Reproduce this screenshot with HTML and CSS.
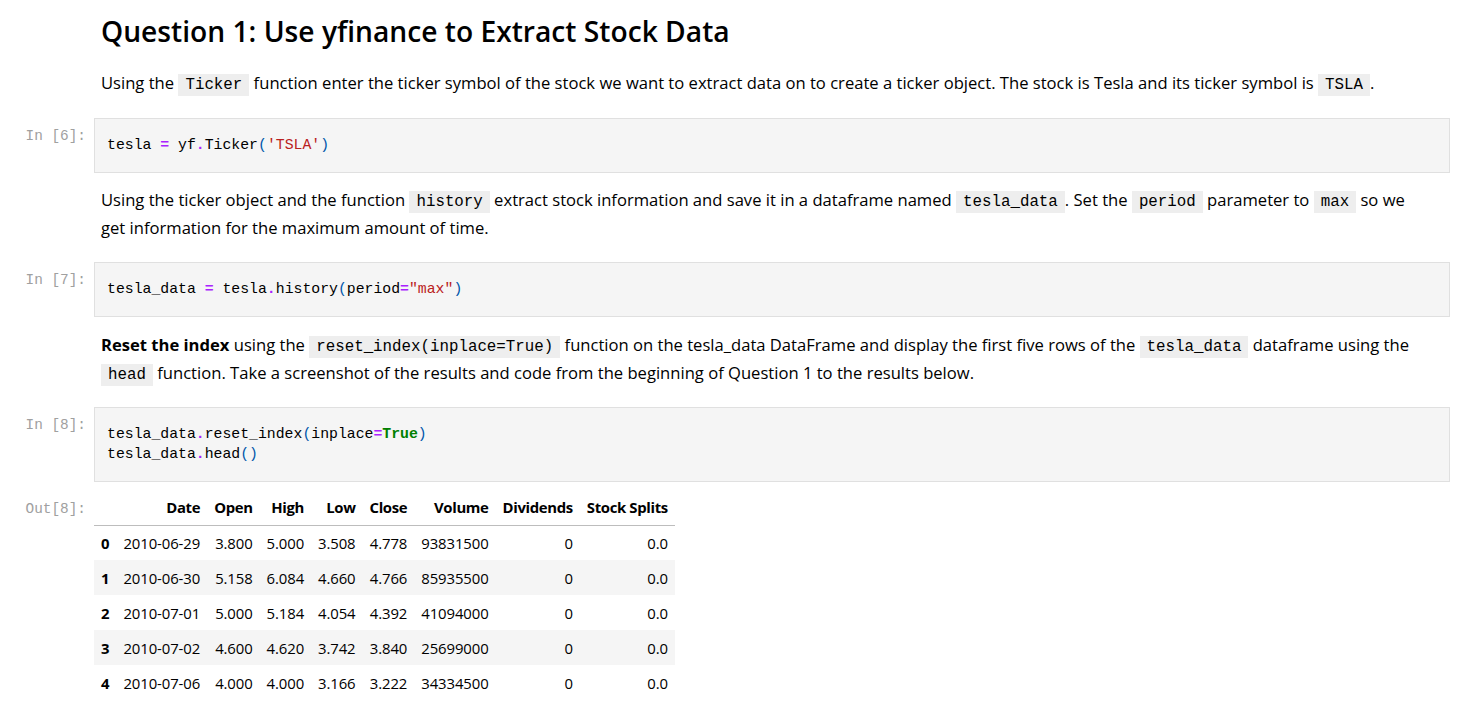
FILE: index.html
```html
<!DOCTYPE html>
<html>
<head>
<meta charset="utf-8">
<link rel="stylesheet" href="styles.css">
</head>
<body>
<div class="notebook">
  <div class="cell md first">
    <div class="prompt"></div>
    <div class="md-content">
      <h1>Question 1: Use yfinance to Extract Stock Data</h1>
      <p>Using the <code>Ticker</code> function enter the ticker symbol of the stock we want to extract data on to create a ticker object. The stock is Tesla and its ticker symbol is <code>TSLA</code>.</p>
    </div>
  </div>

  <div class="cell code">
    <div class="prompt">In&nbsp;[6]:</div>
    <div class="input"><pre>tesla <span class="op">=</span> yf<span class="op">.</span>Ticker<span class="br">(</span><span class="str">'TSLA'</span><span class="br">)</span></pre></div>
  </div>

  <div class="cell md">
    <div class="prompt"></div>
    <div class="md-content">
      <p>Using the ticker object and the function <code>history</code> extract stock information and save it in a dataframe named <code>tesla_data</code>. Set the <code>period</code> parameter to <code>max</code> so we get information for the maximum amount of time.</p>
    </div>
  </div>

  <div class="cell code">
    <div class="prompt">In&nbsp;[7]:</div>
    <div class="input"><pre>tesla_data <span class="op">=</span> tesla<span class="op">.</span>history<span class="br">(</span>period<span class="op">=</span><span class="str">"max"</span><span class="br">)</span></pre></div>
  </div>

  <div class="cell md roomy">
    <div class="prompt"></div>
    <div class="md-content">
      <p><strong>Reset the index</strong> using the <code>reset_index(inplace=True)</code> function on the tesla_data DataFrame and display the first five rows of the <code>tesla_data</code> dataframe using the <code>head</code> function. Take a screenshot of the results and code from the beginning of Question 1 to the results below.</p>
    </div>
  </div>

  <div class="cell code">
    <div class="prompt">In&nbsp;[8]:</div>
    <div class="input"><pre>tesla_data<span class="op">.</span>reset_index<span class="br">(</span>inplace<span class="op">=</span><span class="kw">True</span><span class="br">)</span>
tesla_data<span class="op">.</span>head<span class="br">()</span></pre></div>
  </div>

  <div class="cell out">
    <div class="prompt">Out[8]:</div>
    <div class="output">
      <table class="df">
        <thead>
          <tr><th></th><th>Date</th><th>Open</th><th>High</th><th>Low</th><th>Close</th><th>Volume</th><th>Dividends</th><th>Stock Splits</th></tr>
        </thead>
        <tbody>
          <tr><th>0</th><td>2010-06-29</td><td>3.800</td><td>5.000</td><td>3.508</td><td>4.778</td><td>93831500</td><td>0</td><td>0.0</td></tr>
          <tr><th>1</th><td>2010-06-30</td><td>5.158</td><td>6.084</td><td>4.660</td><td>4.766</td><td>85935500</td><td>0</td><td>0.0</td></tr>
          <tr><th>2</th><td>2010-07-01</td><td>5.000</td><td>5.184</td><td>4.054</td><td>4.392</td><td>41094000</td><td>0</td><td>0.0</td></tr>
          <tr><th>3</th><td>2010-07-02</td><td>4.600</td><td>4.620</td><td>3.742</td><td>3.840</td><td>25699000</td><td>0</td><td>0.0</td></tr>
          <tr><th>4</th><td>2010-07-06</td><td>4.000</td><td>4.000</td><td>3.166</td><td>3.222</td><td>34334500</td><td>0</td><td>0.0</td></tr>
        </tbody>
      </table>
    </div>
  </div>
</div>
</body>
</html>
```

FILE: styles.css
```css
html, body {
  margin: 0;
  padding: 0;
  background: #ffffff;
}

body {
  font-family: "Open Sans", "Noto Sans", sans-serif;
  color: #000000;
}

.notebook {
  padding-right: 15px;
}

.cell {
  display: flex;
  align-items: flex-start;
}

.prompt {
  flex: none;
  width: 94px;
  box-sizing: border-box;
  padding-right: 8px;
  text-align: right;
  font-family: "Liberation Mono", monospace;
  font-size: 14.4px;
  line-height: 20px;
  color: #a0a0a0;
  white-space: nowrap;
}

.md {
  padding: 13px 0 20px;
}

.md.roomy {
  padding-top: 14px;
}

.md.first {
  padding: 11px 0 21px;
}

.md-content {
  flex: 1;
  min-width: 0;
  padding-left: 7px;
  padding-right: 40px;
}

h1 {
  margin: 0 0 18px;
  font-size: 28.2px;
  font-weight: 600;
  line-height: 40px;
  color: #000;
}

p {
  margin: 0;
  font-size: 16.6px;
  line-height: 28px;
}

strong {
  font-weight: 700;
}

code {
  font-family: "Liberation Mono", monospace;
  font-size: 15.8px;
  line-height: 1;
  background: #eeeeee;
  padding: 2px 7px;
}

.code .prompt {
  padding-top: 8px;
}

.input {
  flex: 1;
  min-width: 0;
  background: #f5f5f5;
  border: 1px solid #e0e0e0;
}

.input pre {
  margin: 0;
  padding: 16px 12px 17px;
  font-family: "Liberation Mono", monospace;
  font-size: 14.8px;
  line-height: 20px;
  color: #000;
}

.op {
  color: #aa22ff;
  font-weight: 700;
}

.str {
  color: #ba2121;
}

.br {
  color: #0055aa;
}

.kw {
  color: #008000;
  font-weight: 700;
}

.out {
  margin-top: 8px;
}

.out .prompt {
  padding-top: 9px;
}

.output {
  flex: 1;
}

.df {
  border-collapse: collapse;
  font-size: 14.9px;
  letter-spacing: -0.1px;
}

.df th, .df td {
  height: 35px;
  padding: 0 7px;
  text-align: right;
  vertical-align: middle;
  white-space: nowrap;
  box-sizing: border-box;
}

.df th {
  font-weight: 700;
}

.df thead th {
  border-bottom: 1px solid #bdbdbd;
  letter-spacing: -0.35px;
}

.df tbody tr:nth-child(even) {
  background: #f5f5f5;
}
```
